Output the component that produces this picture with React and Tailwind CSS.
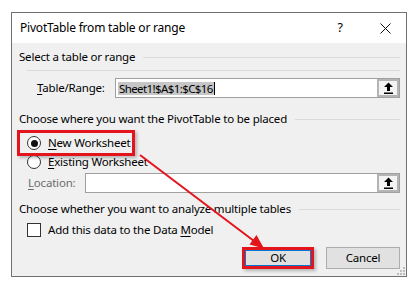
import React from 'react';

const font = { fontFamily: '"Noto Sans", "Liberation Sans", sans-serif' };

function PickButton() {
  return (
    <div className="w-[22px] h-full border-2 border-[#b4b4b4] bg-[#f3f3f3] flex items-center justify-center shrink-0">
      <svg width="11" height="12" viewBox="0 0 11 12">
        <path d="M5.5 0.5 L10 5 L7 5 L7 9 L4 9 L4 5 L1 5 Z" fill="#000" />
        <rect x="1" y="10.5" width="9" height="1.5" fill="#000" />
      </svg>
    </div>
  );
}

function Section({ text }) {
  return (
    <div className="h-[16px] flex items-center gap-[8px]">
      <span className="whitespace-nowrap">{text}</span>
      <div className="flex-1 border-t border-[#dadada]" />
    </div>
  );
}

function Radio({ checked }) {
  return (
    <div className="w-[14px] h-[14px] rounded-full border border-[#333] bg-white flex items-center justify-center shrink-0">
      {checked && <div className="w-[7px] h-[7px] rounded-full bg-[#111]" />}
    </div>
  );
}

export default function App() {
  return (
    <div
      className="relative w-[419px] h-[293px] bg-white text-[11.5px] tracking-[-0.2px] text-black"
      style={font}
    >
      <div className="pt-[12px] pl-[11px]">
        <div className="relative w-[396px] h-[265px] border border-[#707070] bg-[#f0f0f0] flex flex-col">
          {/* title bar */}
          <div className="h-[30px] bg-white flex items-center pl-[8px]">
            <span className="flex-1 text-[12px]">PivotTable from table or range</span>
            <span className="w-[20px] text-center text-[12.5px] mr-[30px]">?</span>
            <svg width="11" height="11" viewBox="0 0 11 11" className="mr-[15px]">
              <path d="M0.5 0.5 L10.5 10.5 M10.5 0.5 L0.5 10.5" stroke="#111" strokeWidth="1" />
            </svg>
          </div>

          {/* body */}
          <div className="flex-1 flex flex-col pl-[7px] pr-[6px] pt-[6px]">
            <Section text="Select a table or range" />
            <div className="mt-[5px] ml-[8px] border-t border-[#dadada]" />

            <div className="mt-[7px] h-[20px] flex items-center">
              <div className="w-[96px] pl-[18px] shrink-0">
                <span className="underline underline-offset-2">T</span>able/Range:
              </div>
              <div className="flex-1 h-full border border-[#a0a0a0] bg-white flex items-stretch">
                <div className="flex-1 flex items-center pl-[2px]">
                  <span className="bg-[#c6c6c6] leading-[13px] px-[1px] tracking-[-0.6px]">Sheet1!$A$1:$C$16</span>
                  <span className="w-px h-[13px] bg-black" />
                </div>
                <PickButton />
              </div>
            </div>

            <div className="mt-[13px]">
              <Section text="Choose where you want the PivotTable to be placed" />
            </div>

            <div className="relative mt-[7px] h-[18px] flex items-center pl-[8px] gap-[7px]">
              <Radio checked />
              <span>
                <span className="underline underline-offset-2">N</span>ew Worksheet
              </span>
              <div className="absolute left-[-2px] top-[-4px] w-[118px] h-[26px] border-[3px] border-[#e3141c] shadow-[2px_2px_3px_rgba(0,0,0,0.25)]" />
            </div>

            <div className="mt-[1px] h-[18px] flex items-center pl-[8px] gap-[7px]">
              <Radio />
              <span>
                <span className="underline underline-offset-2">E</span>xisting Worksheet
              </span>
            </div>

            <div className="mt-[2px] h-[20px] flex items-center">
              <div className="w-[66px] pl-[9px] shrink-0 text-[#6d6d6d]">
                <span className="underline underline-offset-2">L</span>ocation:
              </div>
              <div className="flex-1 h-full border border-[#a0a0a0] bg-white flex justify-end">
                <PickButton />
              </div>
            </div>

            <div className="mt-[8px]">
              <Section text="Choose whether you want to analyze multiple tables" />
            </div>

            <div className="mt-[4px] h-[18px] flex items-center pl-[8px] gap-[7px]">
              <div className="w-[14px] h-[14px] border border-[#333] bg-white shrink-0" />
              <span>
                Add this data to the Data <span className="underline underline-offset-2">M</span>odel
              </span>
            </div>

            <div className="mt-[8px] h-[22px] flex justify-end gap-[12px]">
              <div className="w-[72px] h-full border-[3px] border-[#e3141c] shadow-[2px_2px_3px_rgba(0,0,0,0.25)]">
                <div className="w-full h-full border border-[#0078d7] bg-[#e1e1e1] flex items-center justify-center">
                  OK
                </div>
              </div>
              <div className="w-[74px] h-full border border-[#adadad] bg-[#e1e1e1] flex items-center justify-center">
                Cancel
              </div>
            </div>
          </div>

          {/* resize grip */}
          <svg width="8" height="8" viewBox="0 0 8 8" className="absolute right-[1px] bottom-[1px]">
            <rect x="6" y="0" width="2" height="2" fill="#bdbdbd" />
            <rect x="3" y="3" width="2" height="2" fill="#bdbdbd" />
            <rect x="6" y="3" width="2" height="2" fill="#bdbdbd" />
            <rect x="0" y="6" width="2" height="2" fill="#bdbdbd" />
            <rect x="3" y="6" width="2" height="2" fill="#bdbdbd" />
            <rect x="6" y="6" width="2" height="2" fill="#bdbdbd" />
          </svg>
        </div>
      </div>

      {/* annotation arrow */}
      <svg className="absolute left-0 top-0 pointer-events-none" width="419" height="293" viewBox="0 0 419 293">
        <line x1="140" y1="155" x2="254" y2="241" stroke="#e3141c" strokeWidth="2" />
        <path d="M264 248.5 L249.5 244.5 L256.5 235 Z" fill="#e3141c" />
      </svg>
    </div>
  );
}
